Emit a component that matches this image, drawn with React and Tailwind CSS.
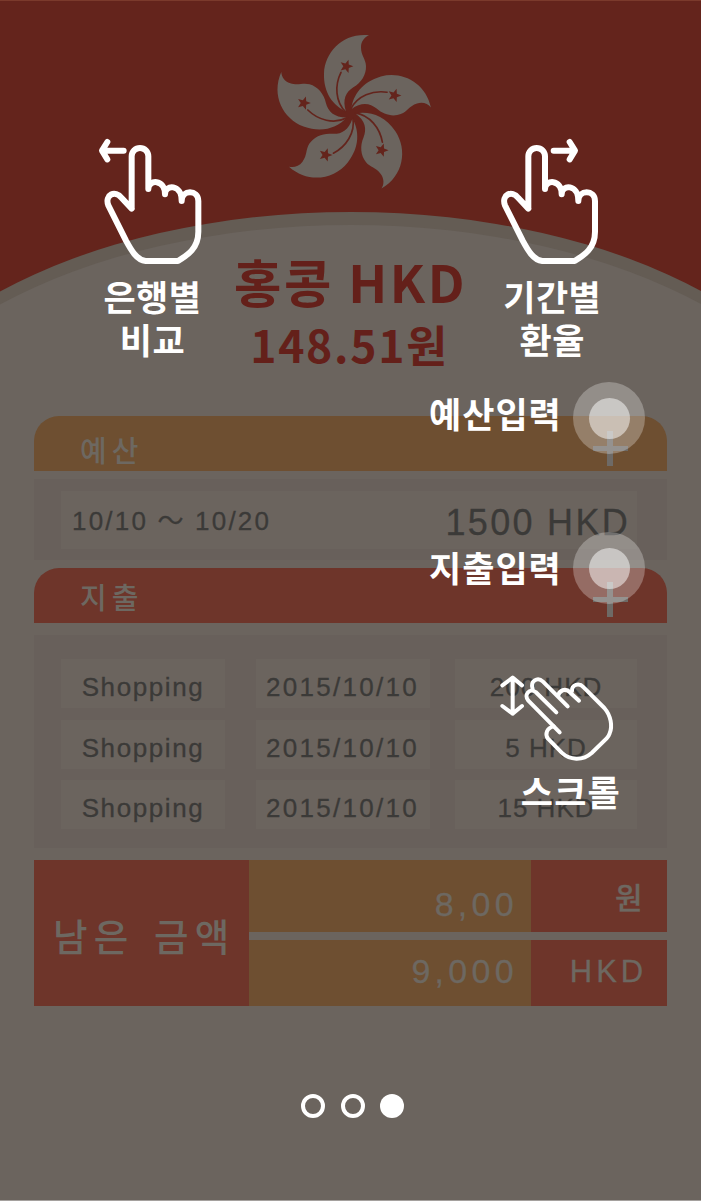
const PETALS = [0, 72, 144, 216, 288];
const STAR = Array.from({ length: 10 }, (_, i) => {
  const r = i % 2 ? 9 : 21;
  const a = (i * 36 - 72) * (Math.PI / 180);
  return `${259 + r * Math.cos(a)},${139 + r * Math.sin(a)}`;
}).join(' ');

function Bauhinia() {
  return (
    <svg className="mx-auto block h-[180px] w-[190px]" viewBox="0 0 570 540">
      {PETALS.map((deg) => (
        <g key={deg} transform={`rotate(${deg} 271 282)`}>
          <path
            fill="#6b645e"
            d="M327 46C250 38 195 95 192 160C190 220 220 257 258 275C246 238 258 216 280 202C304 188 319 164 318 138C317 116 303 108 303 82C303 64 314 51 327 46Z"
          />
          <path d="M243 157C224 195 225 245 258 277" fill="none" stroke="#64241c" strokeWidth="5" strokeLinecap="round" />
          <polygon points={STAR} fill="#64241c" />
        </g>
      ))}
    </svg>
  );
}

function Hand({ right }) {
  return (
    <svg className="block h-[130px] w-[110px]" viewBox={right ? '42 45 330 390' : '50 45 330 390'} fill="none" stroke="#fff" strokeWidth="18" strokeLinecap="round" strokeLinejoin="round">
      <path d="M154 265V109A25 25 0 0 1 204 109V207C204 178 254 176 254 223C254 192 304 192 304 243C304 208 354 208 354 243V335C354 385 322 405 293 423H196C169 420 152 390 137 362L84 256C72 224 105 209 124 234L154 266" />
      <path d={right ? 'M230 92H290M278 66L294 92L278 118' : 'M130 92H68M81 66L65 92L81 118'} />
    </svg>
  );
}

function ScrollHand() {
  return (
    <svg className="block h-[90px] w-[120px]" viewBox="175 130 360 270" fill="none" stroke="#fff" strokeWidth="12" strokeLinecap="round" strokeLinejoin="round">
      <path d="M219 146V252M188 167L219 144L247 167M188 229L219 252L247 229" />
      <path d="M360 308L266 213C251 195 270 174 288 187L350 248" />
      <path d="M279 178C271 155 293 140 310 156L384 230M355 200C358 182 377 173 392 189L418 213" />
      <path d="M397 184C396 165 418 158 432 173L494 235C514 258 519 290 510 311C508 317 505 322 501 326L456 370C429 394 390 392 366 369L325 327C315 314 321 295 342 290" />
    </svg>
  );
}

function SectionHeader({ label, tone, labelClass, plusClass }) {
  return (
    <div className={'flex h-[54.5px] items-center justify-between rounded-t-[25px] pr-[39px] pl-[46px] ' + tone}>
      <span className={'text-[29px] leading-none font-medium tracking-[5px] ' + labelClass}>{label}</span>
      <span className={'relative h-[35px] w-[35px] ' + plusClass}>
        <span className="absolute top-[15px] left-0 h-[5px] w-[35px] bg-[#6e6a66]" />
        <span className="absolute top-0 left-[14.5px] h-[35px] w-[6px] bg-[#6e6a66]" />
      </span>
    </div>
  );
}

function Touch({ label, labelClass }) {
  return (
    <div className="flex h-[72px] items-center gap-[9px]">
      <span className={'w-[135px] text-[35px] leading-none font-bold tracking-[1px] ' + labelClass}>{label}</span>
      <span className="flex h-[72px] w-[72px] items-center justify-center rounded-full bg-white/27">
        <span className="h-[41px] w-[41px] rounded-full bg-white/50" />
      </span>
    </div>
  );
}

const ROWS = ['200 HKD', '5 HKD', '15 HKD'];

export default function App() {
  return (
    <div className="relative h-[1201px] w-[701px] overflow-hidden border-b border-[#a5a19e] bg-[#6b645e] font-['Liberation_Sans','Noto_Sans_CJK_KR',sans-serif] whitespace-nowrap text-[#6d6861]">
      <header className="relative h-[416px] border-t border-[#7b3a2c]">
        <svg className="absolute top-0 left-0 h-[415px] w-[701px]" viewBox="0 1 701 415">
          <rect width="701" height="320" fill="#64241c" />
          <ellipse cx="351" cy="488" rx="500" ry="276" fill="#645c54" />
          <ellipse cx="351" cy="501" rx="500" ry="276" fill="#6b645e" />
        </svg>
        <div className="relative pt-[19px] pl-[9px]">
          <Bauhinia />
        </div>
        <div className="relative pt-[53px] text-center font-['Noto_Sans_CJK_KR',sans-serif] font-bold text-[#64201a]">
          <div className="text-[51.5px] leading-[56px] tracking-[2.6px]">홍콩 HKD</div>
          <div className="pt-[8px] pr-[2px] text-[44.5px] leading-[54px] tracking-[1.7px]">148.51원</div>
        </div>
      </header>

      <main className="mx-[34px] flex w-[632.5px] flex-col">
        <SectionHeader label="예산" tone="bg-[#6e4f31]" labelClass="pt-[18px]" plusClass="mt-[11px]" />
        <div className="mt-[8.5px] h-[81px] bg-[#68605b] px-[27px] pt-[12px]">
          <div className="flex h-[58px] w-[576px] items-center justify-between bg-[#6b645e] pr-[7px] pl-[11px] text-[#3b3a38]">
            <span className="pt-[3px] text-[26px] tracking-[2.2px] [-webkit-text-stroke:0.3px]">10/10 ～ 10/20</span>
            <span className="pt-[6px] text-[36px] tracking-[2.3px] [-webkit-text-stroke:0.3px]">1500 HKD</span>
          </div>
        </div>
        <div className="h-2" />
        <SectionHeader label="지출" tone="bg-[#6e352a]" labelClass="pt-[8px]" plusClass="mt-[9px]" />
        <div className="mt-[12.5px] flex h-[213px] flex-col gap-[11.5px] bg-[#68605b] px-[27px] pt-[24px] text-[26px] text-[#3b3a38] [-webkit-text-stroke:0.3px]">
          {ROWS.map((amount) => (
            <div key={amount} className="grid h-[49px] w-[576px] grid-cols-[164px_174px_182px] grid-rows-[49px] leading-[56px]">
              <span className="bg-[#6b645e] text-center tracking-[1.6px]">Shopping</span>
              <span className="ml-[30.5px] w-[174px] bg-[#6b645e] text-center tracking-[2.3px]">2015/10/10</span>
              <span className="ml-[56px] w-[182px] bg-[#6b645e] text-center tracking-[1px]">{amount}</span>
            </div>
          ))}
        </div>
        <div className="mt-[12px] grid h-[146px] grid-cols-[215px_282px_135.5px]">
          <div className="flex items-center bg-[#6e352a] pt-[10px] pl-[19px] text-[37.5px] font-medium tracking-[6.2px] [word-spacing:3px]">남은 금액</div>
          <div className="grid grid-rows-[72px_66px] gap-2 text-right text-[34px] tracking-[4.3px] [-webkit-text-stroke:0.3px]">
            <div className="bg-[#6e4f31] pr-[13px] leading-[88px]">8,00</div>
            <div className="bg-[#6e4f31] pr-[13px] leading-[62px]">9,000</div>
          </div>
          <div className="grid grid-rows-[72px_66px] gap-2 text-right text-[31px] tracking-[3.9px] [-webkit-text-stroke:0.3px]">
            <div className="bg-[#6e352a] pr-[20px] text-[30px] leading-[78px] font-medium">원</div>
            <div className="bg-[#6e352a] pr-[19.5px] leading-[63px]">HKD</div>
          </div>
        </div>
      </main>

      <div className="absolute inset-0 font-['Noto_Sans_CJK_KR',sans-serif] font-bold text-white">
        <div className="absolute top-[135px] left-[96.7px]">
          <Hand />
          <div className="pt-[9px] pl-[1.5px] text-center text-[35px] leading-[43px] tracking-[0.5px]">은행별<br />비교</div>
        </div>
        <div className="absolute top-[135px] left-[491.2px]">
          <Hand right />
          <div className="pt-[9px] pl-[12px] text-center text-[35px] leading-[43px] tracking-[0.5px]">기간별<br />환율</div>
        </div>
        <div className="absolute top-[382px] left-[429px]"><Touch label="예산입력" labelClass="pb-[12px]" /></div>
        <div className="absolute top-[532px] left-[429px]"><Touch label="지출입력" labelClass="pb-[4px]" /></div>
        <div className="absolute top-[673.3px] left-[498.3px]">
          <ScrollHand />
          <div className="pt-[6px] pl-[22.5px] text-[35px] leading-[43px] tracking-[1.2px]">스크롤</div>
        </div>
        <div className="absolute top-[1094px] left-[301px] flex gap-[15.5px]">
          <span className="h-[24px] w-[24px] rounded-full border-4 border-white" />
          <span className="h-[24px] w-[24px] rounded-full border-4 border-white" />
          <span className="h-[24px] w-[24px] rounded-full bg-white" />
        </div>
      </div>
    </div>
  );
}
